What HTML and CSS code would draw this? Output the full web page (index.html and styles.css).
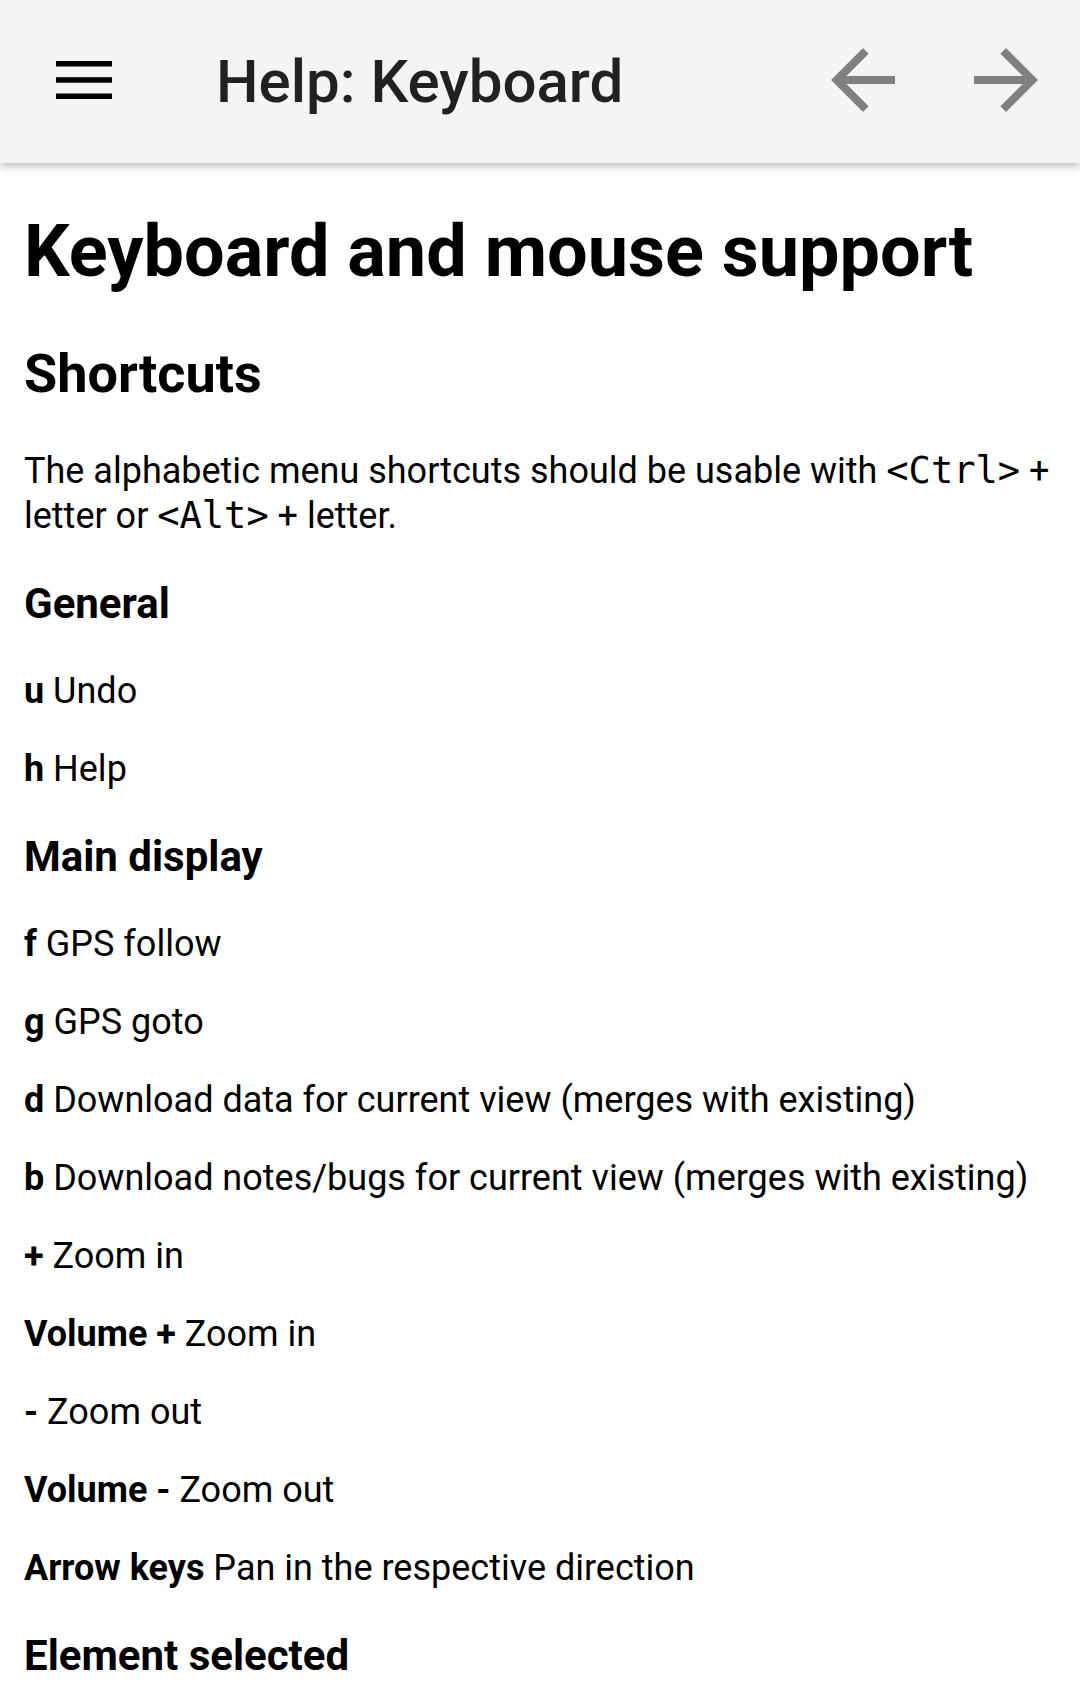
FILE: index.html
```html
<!DOCTYPE html>
<html lang="en">
<head>
<meta charset="utf-8">
<title>Help: Keyboard</title>
<link rel="stylesheet" href="styles.css">
</head>
<body>
<header class="toolbar">
  <div class="nav-icon">
    <svg width="56" height="38" viewBox="0 0 56 38"><rect x="0" y="0" width="56" height="5.5" fill="#000"/><rect x="0" y="16.2" width="56" height="5.5" fill="#000"/><rect x="0" y="32.5" width="56" height="5.5" fill="#000"/></svg>
  </div>
  <div class="title">Help: Keyboard</div>
  <div class="actions">
    <svg class="action" width="96" height="96" viewBox="0 0 24 24"><path d="M20 11H7.83l5.59-5.59L12 4l-8 8 8 8 1.41-1.41L7.83 13H20v-2z"/></svg>
    <svg class="action" width="96" height="96" viewBox="0 0 24 24"><path d="M12 4l-1.41 1.41L16.17 11H4v2h12.17l-5.58 5.59L12 20l8-8z"/></svg>
  </div>
</header>
<main class="content">
  <h1>Keyboard and mouse support</h1>
  <h2>Shortcuts</h2>
  <p class="intro">The alphabetic menu shortcuts should be usable with <code>&lt;Ctrl&gt;</code> + letter or <code>&lt;Alt&gt;</code> + letter.</p>
  <h3 class="after-intro">General</h3>
  <p><b>u</b> Undo</p>
  <p><b>h</b> Help</p>
  <h3>Main display</h3>
  <p><b>f</b> GPS follow</p>
  <p><b>g</b> GPS goto</p>
  <p><b>d</b> Download data for current view (merges with existing)</p>
  <p><b>b</b> Download notes/bugs for current view (merges with existing)</p>
  <p><b>+</b> Zoom in</p>
  <p><b>Volume +</b> Zoom in</p>
  <p><b>-</b> Zoom out</p>
  <p><b>Volume -</b> Zoom out</p>
  <p><b>Arrow keys</b> Pan in the respective direction</p>
  <h3>Element selected</h3>
</main>
</body>
</html>
```
FILE: styles.css
```css
html, body {
  margin: 0;
  padding: 0;
  background: #ffffff;
}
body {
  font-family: Roboto, "Liberation Sans", sans-serif;
  font-size: 36px;
  color: #000;
  overflow: hidden;
}
.toolbar {
  height: 163px;
  background: #f4f4f4;
  display: flex;
  align-items: center;
  box-shadow: 0 3px 8px rgba(0, 0, 0, 0.28);
  position: relative;
  z-index: 1;
}
.nav-icon {
  margin-left: 56px;
  width: 56px;
  height: 38px;
  margin-top: -4px;
  display: flex;
}
.title {
  margin-left: 104px;
  font-size: 60px;
  font-weight: 500;
  color: #212121;
  flex: 1;
  white-space: nowrap;
}
.actions {
  display: flex;
  gap: 47px;
  margin-right: 26px;
  margin-top: -3px;
}
.action {
  fill: #808080;
  display: block;
}
.content {
  padding: 0 24px;
}
h1 {
  font-size: 72px;
  font-weight: 700;
  margin: 46px 0 48px;
}
h2 {
  font-size: 54px;
  font-weight: 700;
  margin: 45px 0 44px;
}
h3 {
  font-size: 42px;
  font-weight: 700;
  margin: 42px 0;
}
h3.after-intro {
  margin-top: 0;
}
p {
  margin: 36px 0;
}
.intro {
  line-height: 45px;
  margin-bottom: 40px;
}
b {
  font-weight: 700;
}
code {
  font-family: "DejaVu Sans Mono", "Liberation Mono", monospace;
  font-size: 37px;
  line-height: 1;
}
```
